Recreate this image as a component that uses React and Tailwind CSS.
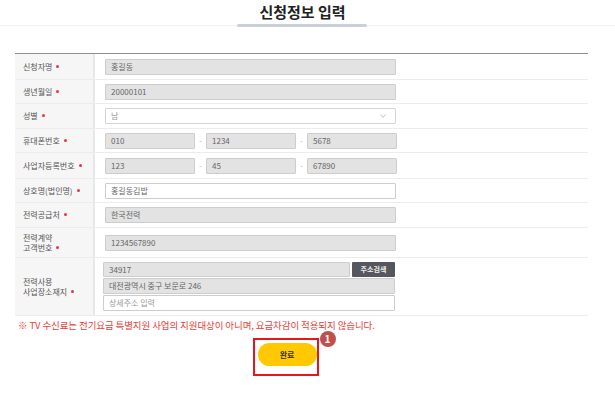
import React from "react";

const Dot = () => (
  <span className="inline-block w-[3px] h-[3px] rounded-full bg-[#e8334a] ml-[4px] align-middle relative top-[-1px]" />
);

const Row = ({ h, label, children, pl = "pl-[10px]" }) => (
  <div className={`flex border-b border-[#ececec] ${h}`}>
    <div className="w-[80px] shrink-0 bg-[#f6f6f6] border-r-2 border-[#e8e8e8] pl-[8px] flex items-center text-[8px] leading-[10px] text-[#555]">
      <div>{label}</div>
    </div>
    <div className={`flex-1 flex items-center ${pl}`}>{children}</div>
  </div>
);

const Gray = ({ w = "w-[291px]", text, h = "h-[16px]" }) => (
  <div className={`${w} ${h} bg-[#e3e3e3] border border-[#cdcdcd] rounded-[1px] flex items-center px-[5px] text-[8px] text-[#666]`}>
    {text}
  </div>
);

const White = ({ w = "w-[291px]", text, h = "h-[16px]", color = "text-[#888]" }) => (
  <div className={`${w} ${h} bg-white border border-[#cdcdcd] rounded-[1px] flex items-center px-[5px] text-[8px] ${color}`}>
    {text}
  </div>
);

const Dash = () => (
  <span className="w-[11px] text-center text-[7px] text-[#aaa]">-</span>
);

export default function App() {
  return (
    <div className="w-[615px] h-[393px] bg-white overflow-hidden font-['Noto_Sans_CJK_KR','Noto_Sans',sans-serif]">
      <div className="relative h-[26px] border-b border-[#eef0f3]">
        <div className="pt-[2px] text-center text-[15px] leading-[20px] font-bold text-[#222] w-[605px]">
          신청정보 입력
        </div>
        <div className="absolute left-[237px] top-[24px] w-[130px] h-[3px] rounded-full bg-[#c9d0da]" />
      </div>

      <div className="ml-[15px] w-[573px] mt-[27px] border-t border-[#8e8e8e]">
        <Row h="h-[26px]" label={<>신청자명<Dot /></>}>
          <Gray text="홍길동" />
        </Row>
        <Row h="h-[24px]" label={<>생년월일<Dot /></>}>
          <Gray text="20000101" />
        </Row>
        <Row h="h-[25px]" label={<>성별<Dot /></>}>
          <div className="w-[291px] h-[16px] bg-white border border-[#d5d5d5] rounded-[1px] flex items-center justify-between px-[5px] text-[8px] text-[#999]">
            <span>남</span>
            <svg width="6" height="4" viewBox="0 0 6 4" className="mr-[4px]">
              <path d="M0.5 0.8 L3 3.2 L5.5 0.8" fill="none" stroke="#aaa" strokeWidth="0.8" />
            </svg>
          </div>
        </Row>
        <Row h="h-[24px]" label={<>휴대폰번호<Dot /></>}>
          <Gray w="w-[90px]" text="010" />
          <Dash />
          <Gray w="w-[90px]" text="1234" />
          <Dash />
          <Gray w="w-[90px]" text="5678" />
        </Row>
        <Row h="h-[26px]" label={<>사업자등록번호<Dot /></>}>
          <Gray w="w-[90px]" text="123" />
          <Dash />
          <Gray w="w-[90px]" text="45" />
          <Dash />
          <Gray w="w-[90px]" text="67890" />
        </Row>
        <Row h="h-[24px]" label={<>상호명(법인명)<Dot /></>}>
          <White text="홍길동김밥" color="text-[#666]" />
        </Row>
        <Row h="h-[25px]" label={<>전력공급처<Dot /></>}>
          <Gray text="한국전력" />
        </Row>
        <Row h="h-[30px]" label={<>전력계약<br />고객번호<Dot /></>}>
          <Gray text="1234567890" />
        </Row>
        <Row h="h-[58px]" pl="pl-[8px]" label={<>전력사용<br />사업장소재지<Dot /></>}>
          <div className="flex flex-col">
            <div className="flex items-center gap-[2px]">
              <Gray w="w-[247px]" h="h-[15px]" text="34917" />
              <div className="w-[43px] h-[15px] bg-[#56565e] rounded-[1px] flex items-center justify-center text-[7px] font-bold text-[#eee]">
                주소검색
              </div>
            </div>
            <div className="mt-[1px]">
              <Gray w="w-[292px]" text="대전광역시 중구 보문로 246" />
            </div>
            <div className="mt-[1px]">
              <White w="w-[292px]" text="상세주소 입력" color="text-[#999]" />
            </div>
          </div>
        </Row>
      </div>

      <div className="ml-[18px] mt-[3px] text-[9.5px] leading-[13px] text-[#e8403a] tracking-[-0.1px]">
        ※ TV 수신료는 전기요금 특별지원 사업의 지원대상이 아니며, 요금차감이 적용되지 않습니다.
      </div>

      <div className="flex justify-center mt-[6px]">
        <div className="relative ml-[-44px]">
          <div className="w-[66px] h-[38px] border-2 border-[#e8151b] pt-[3px] pl-[3px]">
            <div className="w-[59px] h-[23px] rounded-full bg-[#ffc800] flex items-center justify-center text-[8px] font-bold text-[#333]">
              완료
            </div>
          </div>
          <div className="absolute left-[67px] top-[-7px] w-[16px] h-[16px] rounded-full bg-[#c0504d] flex items-center justify-center text-[10px] font-bold text-white leading-none">
            1
          </div>
        </div>
      </div>
    </div>
  );
}
